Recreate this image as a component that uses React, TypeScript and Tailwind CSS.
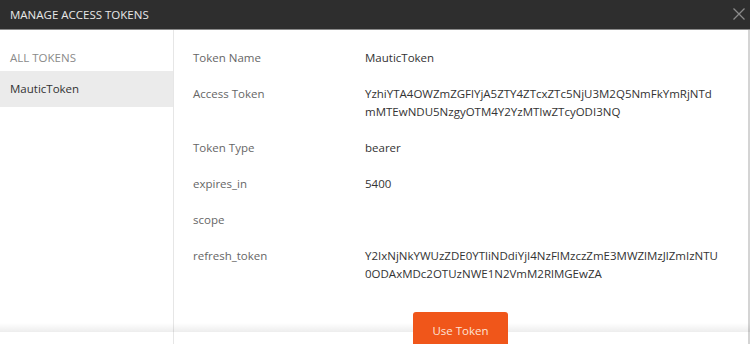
import React from "react";

const rows: { label: string; lines: string[] }[] = [
  { label: "Token Name", lines: ["MauticToken"] },
  {
    label: "Access Token",
    lines: [
      "YzhiYTA4OWZmZGFlYjA5ZTY4ZTcxZTc5NjU3M2Q5NmFkYmRjNTd",
      "mMTEwNDU5NzgyOTM4Y2YzMTIwZTcyODI3NQ",
    ],
  },
  { label: "Token Type", lines: ["bearer"] },
  { label: "expires_in", lines: ["5400"] },
  { label: "scope", lines: [""] },
  {
    label: "refresh_token",
    lines: [
      "Y2IxNjNkYWUzZDE0YTliNDdiYjI4NzFlMzczZmE3MWZlMzJlZmIzNTU",
      "0ODAxMDc2OTUzNWE1N2VmM2RlMGEwZA",
    ],
  },
];

export default function App() {
  return (
    <div className="relative w-[750px] h-[344px] overflow-hidden bg-white font-['Open_Sans',sans-serif] text-[11.5px]">
      <div className="h-[30px] bg-[#2e2e2e] border-b border-[#8a8a8a] flex items-center justify-between pl-[10px] pr-[4px]">
        <span className="text-[#e8e8e8] text-[11.5px] leading-[18px]">MANAGE ACCESS TOKENS</span>
        <svg width="14" height="14" viewBox="0 0 14 14" className="mb-[2px]">
          <path d="M1.5 1.5 L12.5 12.5 M12.5 1.5 L1.5 12.5" stroke="#8a8a8a" strokeWidth="1.3" />
        </svg>
      </div>
      <div className="flex h-[314px]">
        <div className="w-[174px] border-r border-[#e6e6e6] pt-[19px] flex flex-col">
          <div className="pl-[10px] leading-[18px] text-[#8a8a8a]">ALL TOKENS</div>
          <div className="mt-[4px] h-[36px] bg-[#ebebeb] pl-[10px] flex items-center text-[#333] leading-[18px]">
            MauticToken
          </div>
        </div>
        <div className="flex-1 border-r-2 border-[#d4d4d4] pl-[19px] pt-[10px] flex flex-col">
          {rows.map((r) => (
            <div key={r.label} className="grid grid-cols-[172px_1fr] py-[9px] leading-[18px]">
              <div className="text-[#666]">{r.label}</div>
              <div className="text-[#333]">
                {r.lines.map((l, i) => (
                  <div key={i} className="h-[18px] whitespace-nowrap">{l}</div>
                ))}
              </div>
            </div>
          ))}
          <div className="mt-[20px] pl-[220px]">
            <button className="relative z-10 w-[95px] h-[36px] rounded-[3px] bg-[#f0561a] text-[#fde3d6] text-[11.5px] leading-[18px] pt-[1px]">
              Use Token
            </button>
          </div>
        </div>
      </div>
      <div className="pointer-events-none absolute left-0 right-0 top-[323px] h-[9px] bg-gradient-to-b from-black/0 to-black/[0.07]" />
    </div>
  );
}
